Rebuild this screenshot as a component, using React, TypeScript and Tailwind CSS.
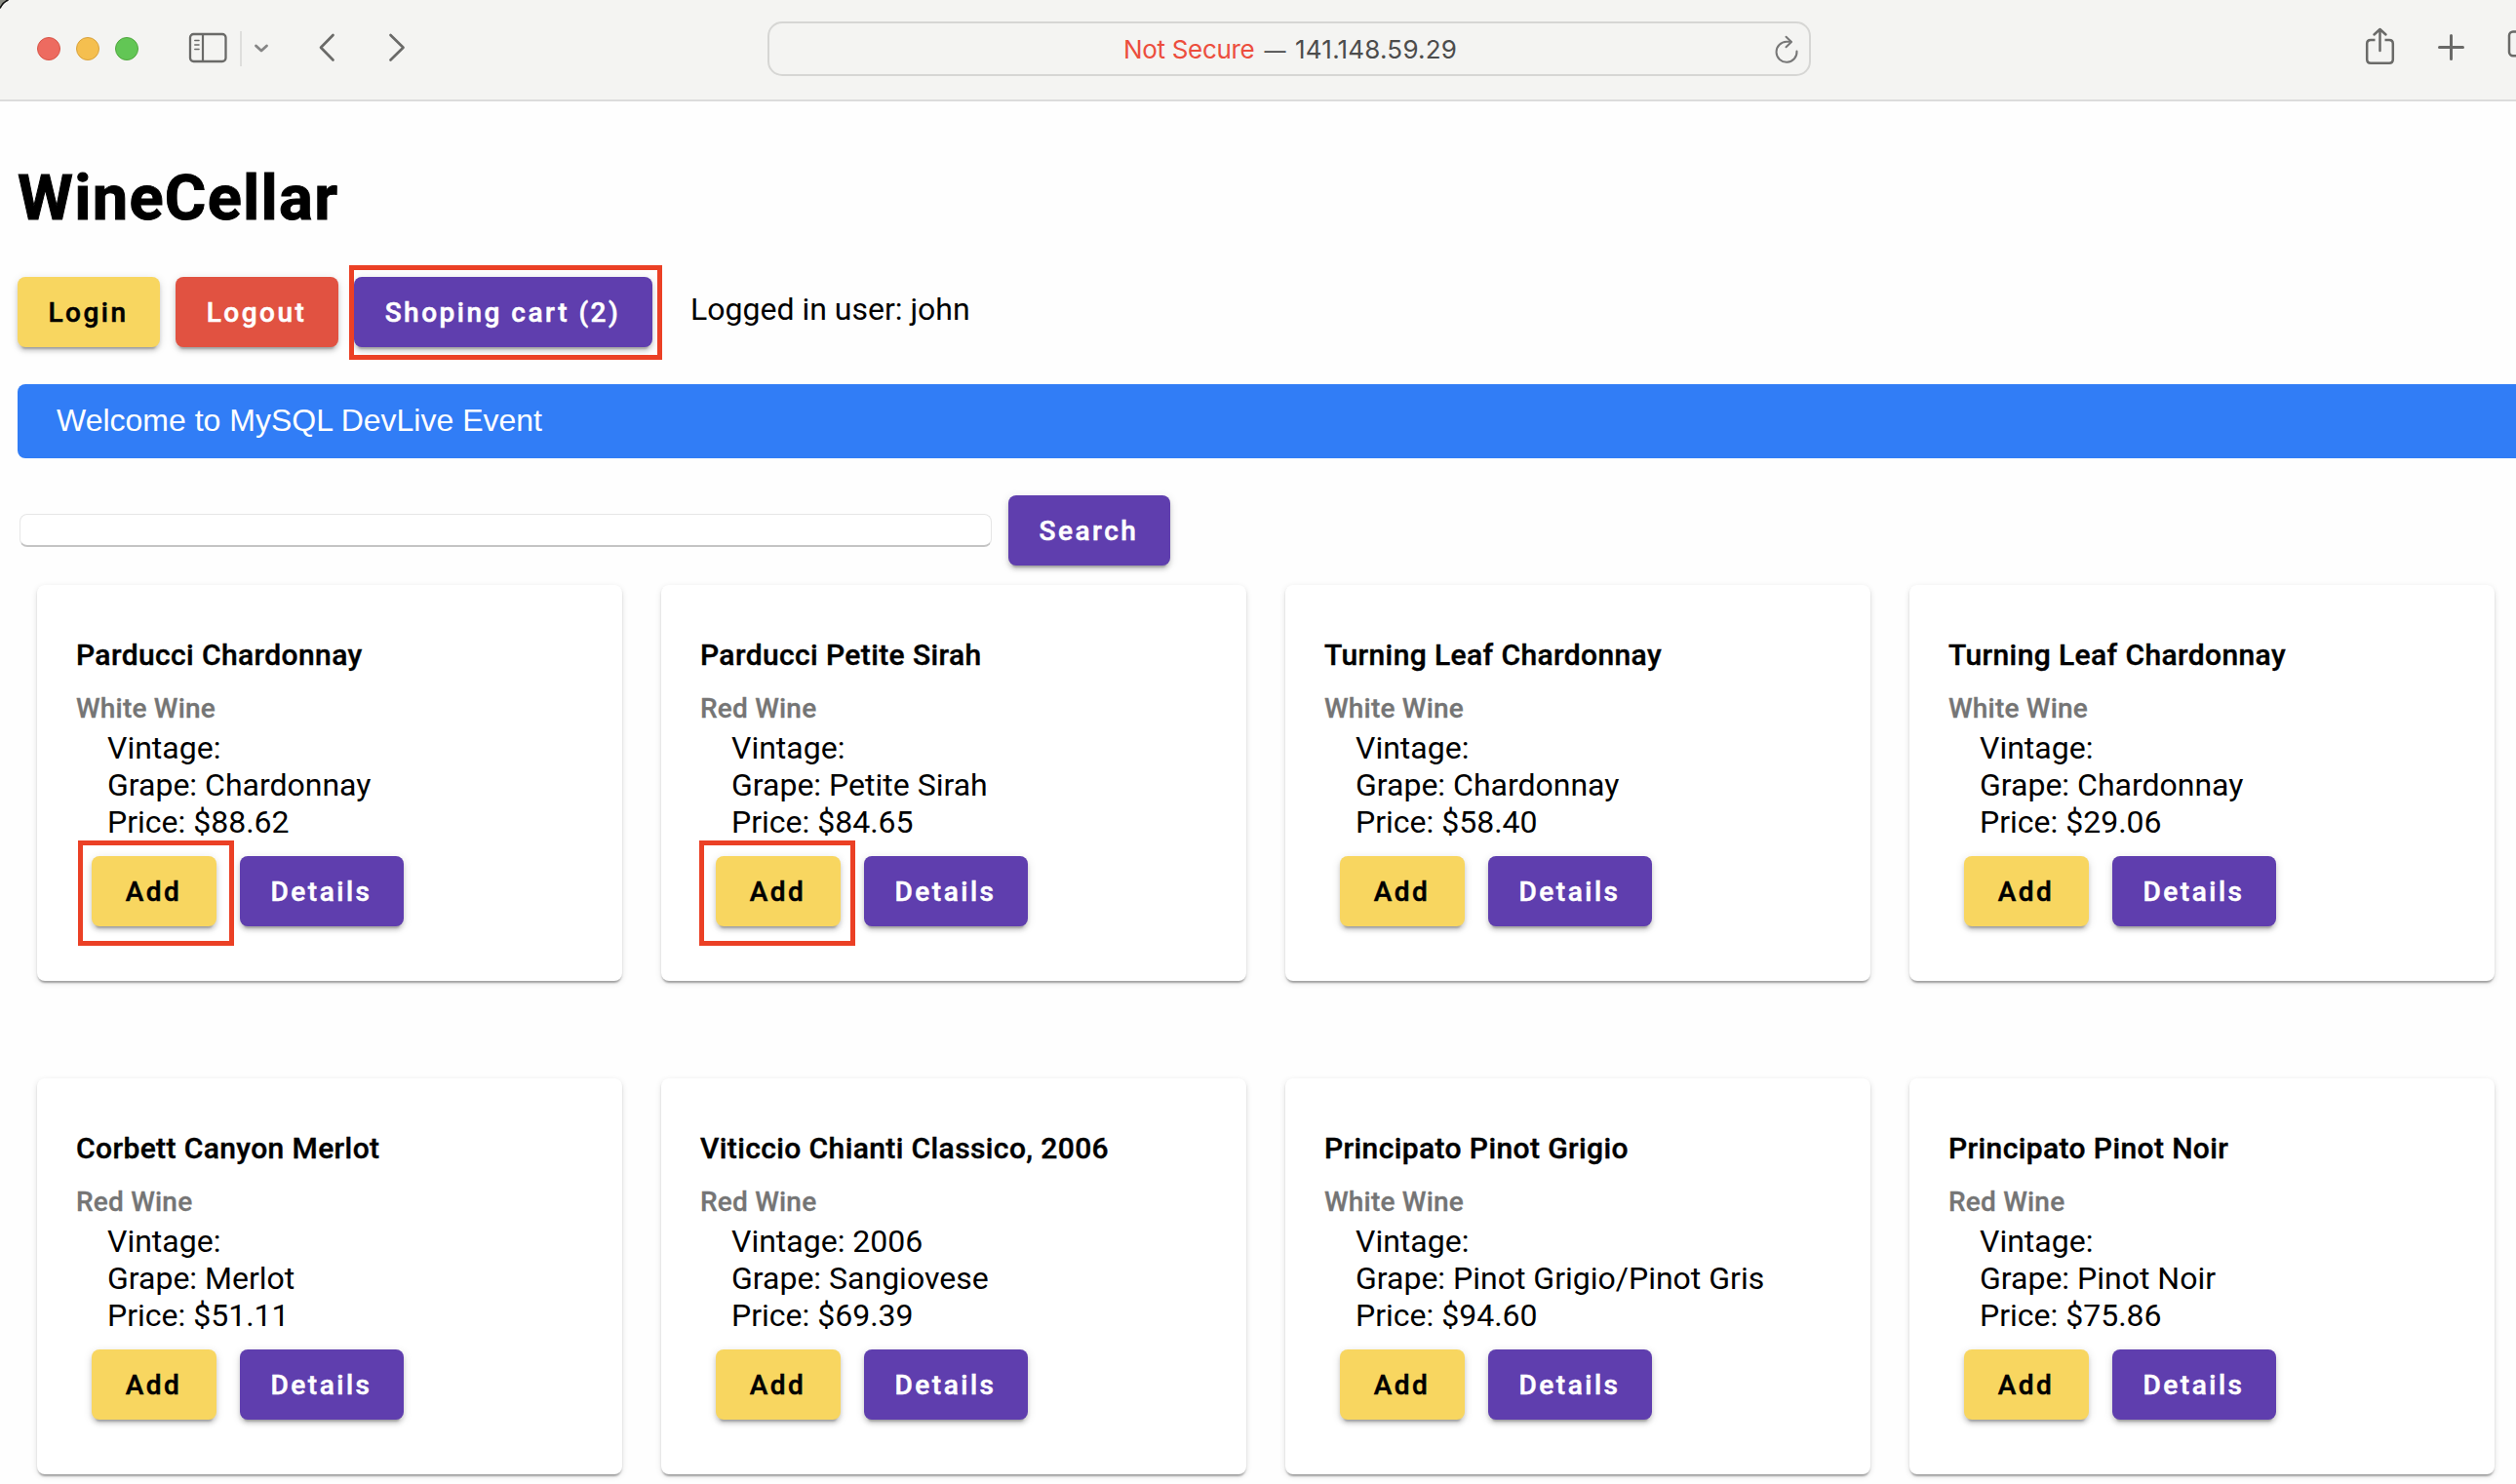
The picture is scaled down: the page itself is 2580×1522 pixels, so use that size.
import type { ReactNode } from "react";

type Wine = { name: string; kind: string; vintage: string; grape: string; price: string; marked?: string };

const wines: Wine[] = [
  { name: "Parducci Chardonnay", kind: "White Wine", vintage: "", grape: "Chardonnay", price: "$88.62", marked: "-left-[14px]" },
  { name: "Parducci Petite Sirah", kind: "Red Wine", vintage: "", grape: "Petite Sirah", price: "$84.65", marked: "-left-[17px]" },
  { name: "Turning Leaf Chardonnay", kind: "White Wine", vintage: "", grape: "Chardonnay", price: "$58.40" },
  { name: "Turning Leaf Chardonnay", kind: "White Wine", vintage: "", grape: "Chardonnay", price: "$29.06" },
  { name: "Corbett Canyon Merlot", kind: "Red Wine", vintage: "", grape: "Merlot", price: "$51.11" },
  { name: "Viticcio Chianti Classico, 2006", kind: "Red Wine", vintage: "2006", grape: "Sangiovese", price: "$69.39" },
  { name: "Principato Pinot Grigio", kind: "White Wine", vintage: "", grape: "Pinot Grigio/Pinot Gris", price: "$94.60" },
  { name: "Principato Pinot Noir", kind: "Red Wine", vintage: "", grape: "Pinot Noir", price: "$75.86" },
];

const tones = {
  yellow: "bg-[#f8d660] text-black",
  red: "bg-[#e15241] text-white",
  purple: "bg-[#5f3eae] text-white",
};

function Button({ tone, width, children }: { tone: keyof typeof tones; width: string; children: ReactNode }) {
  return (
    <button
      className={`flex h-[72px] shrink-0 items-center justify-center whitespace-nowrap rounded-[8px] pr-px pt-[2px] text-[28px] font-medium tracking-[2.5px] [-webkit-text-stroke:0.5px] shadow-[0_6px_2px_-4px_rgba(0,0,0,0.2),0_4px_4px_0_rgba(0,0,0,0.14),0_2px_10px_0_rgba(0,0,0,0.12)] ${tones[tone]} ${width}`}
    >
      {children}
    </button>
  );
}

function Card({ wine }: { wine: Wine }) {
  return (
    <article className="h-[406px] w-[600px] rounded-[8px] bg-white px-[40px] pt-[54px] shadow-[0_4px_2px_-2px_rgba(0,0,0,0.2),0_2px_2px_0_rgba(0,0,0,0.14),0_2px_6px_0_rgba(0,0,0,0.12)]">
      <h2 className="whitespace-nowrap text-[30px] font-medium leading-[36px] tracking-[0.39px] [-webkit-text-stroke:0.4px]">{wine.name}</h2>
      <p className="mt-[19px] text-[28px] font-medium leading-[36px] tracking-[0.2px] text-[#757575] [-webkit-text-stroke:0.3px]">{wine.kind}</p>
      <div className="pl-[32px] pt-[3px] text-[32px] leading-[38px]">
        <p>Vintage: {wine.vintage}</p>
        <p className="whitespace-nowrap">Grape: {wine.grape}</p>
        <p>Price: {wine.price}</p>
      </div>
      <div className="mt-[16px] flex gap-[24px] pl-[16px]">
        <div className="relative">
          <Button tone="yellow" width="w-[128px]">Add</Button>
          {wine.marked && (
            <span className={`absolute -top-[16px] h-[108px] w-[160px] border-[5px] border-[#eb4025] ${wine.marked}`} />
          )}
        </div>
        <Button tone="purple" width="w-[168px]">Details</Button>
      </div>
    </article>
  );
}

function Toolbar() {
  return (
    <header className="relative flex h-[104px] items-start overflow-hidden border-b-2 border-[#dcdcdc] bg-[#f4f4f2]">
      <svg className="absolute left-0 top-0" width="10" height="10" viewBox="0 0 10 10">
        <path d="M0 0H9Q3 2 0 9Z" fill="#8a8c84" />
        <path d="M0 8.500Q3 2 8.500 0" fill="none" stroke="#111" strokeWidth="1.600" />
      </svg>
      <div className="flex gap-4 pl-[38px] pt-[38px]">
        <span className="h-6 w-6 rounded-full border border-[#d85548] bg-[#ed6b60]" />
        <span className="h-6 w-6 rounded-full border border-[#d9a23c] bg-[#f5bf4f]" />
        <span className="h-6 w-6 rounded-full border border-[#51a73f] bg-[#62c655]" />
      </div>
      <svg className="ml-[48px] mt-[28px] shrink-0" width="240" height="44" viewBox="190 28 240 44" fill="none" stroke="#6a6a68" strokeLinecap="round" strokeLinejoin="round">
        <rect x="195" y="35" width="36.500" height="28" rx="3.500" strokeWidth="2.300" />
        <path d="M208 35V63" strokeWidth="2.200" strokeLinecap="butt" />
        <path d="M199.800 41.500H204M199.800 46H204M199.800 50.500H204" strokeWidth="1.500" />
        <path d="M247 32V68" stroke="#dededc" strokeWidth="2" strokeLinecap="butt" />
        <path d="M262.500 47L268 52L273.500 47" stroke="#858585" strokeWidth="2.800" />
        <path d="M341.500 36L329 48.800L341.500 61.500" strokeWidth="2.700" />
        <path d="M400.500 36L413.500 48.800L400.500 61.500" strokeWidth="2.700" />
      </svg>
      <div className="relative ml-[357px] mt-[22px] flex h-[56px] w-[1070px] shrink-0 items-center justify-center rounded-[15px] border-2 border-[#d6d6d4] font-['Inter',sans-serif] text-[26px] tracking-[-0.300px] text-[#4c4c4c]">
        <span className="whitespace-pre pl-[2px]">
          <span className="text-[#ec4e3d]">Not Secure</span>
          <span className="tracking-[0.5px]"> </span>
          <span className="inline-block w-[26px] text-center text-[22px]">—</span>
          <span className="tracking-[0.5px]"> </span>
          <span className="tracking-[0.200px]">141.148.59.29</span>
        </span>
        <svg className="absolute right-[10px] top-[12px]" width="26" height="32" viewBox="0 0 26 32" fill="none" stroke="#777" strokeWidth="2" strokeLinecap="round" strokeLinejoin="round">
          <path d="M23.500 16.500A10.500 10.500 0 1 1 13 6.800H17.500" />
          <path d="M12.500 1.800L18 7L12.500 12.200" />
        </svg>
      </div>
      <svg className="ml-auto mt-[24px] shrink-0" width="160" height="48" viewBox="2420 24 160 48" fill="none" stroke="#6a6a68" strokeWidth="2.500" strokeLinecap="round" strokeLinejoin="round">
        <path d="M2435.500 41H2431Q2427.200 41 2427.200 44.800V61Q2427.200 64.700 2431 64.700H2450Q2453.800 64.700 2453.800 61V44.800Q2453.800 41 2450 41H2445.500" strokeLinecap="butt" />
        <path d="M2440.500 52V30M2434.500 35.500L2440.500 30L2446.500 35.500" />
        <path d="M2501.500 48.500H2525.500M2513.500 36.500V60.500" strokeWidth="3" />
        <rect x="2573" y="32.500" width="26" height="24.700" rx="4" />
      </svg>
    </header>
  );
}

export default function App() {
  return (
    <div className="h-[1522px] w-[2580px] overflow-hidden bg-[#fefefe] font-['Roboto',sans-serif] text-black">
      <Toolbar />
      <main className="pl-[18px]">
        <h1 className="pt-[59px] text-[65px] font-bold leading-[80px] tracking-[1.3px] [-webkit-text-stroke:1px]">WineCellar</h1>
        <div className="mt-[41px] flex gap-4">
          <Button tone="yellow" width="w-[146px]">Login</Button>
          <Button tone="red" width="w-[167px]">Logout</Button>
          <div className="relative">
            <Button tone="purple" width="w-[306px]">Shoping cart (2)</Button>
            <span className="absolute -left-[5px] -top-[12px] h-[97px] w-[321px] border-[5px] border-[#eb4025]" />
          </div>
          <p className="ml-[23px] mt-[14px] text-[32px] leading-[38px]">Logged in user: john</p>
        </div>
        <div className="mt-[38px] h-[76px] rounded-l-[8px] bg-[#317df6] pl-[40px] font-['Liberation_Sans',sans-serif] text-[32px] leading-[74px] text-white">
          Welcome to MySQL DevLive Event
        </div>
        <div className="mt-[38px] flex items-center">
          <input className="ml-[2px] h-[34px] w-[997px] rounded-[8px] border border-b-2 border-[#e6e6e6] border-b-[#c4c4c4] bg-white" />
          <div className="ml-[17px]">
            <Button tone="purple" width="w-[166px]">Search</Button>
          </div>
        </div>
        <section className="grid grid-cols-[repeat(4,600px)] gap-x-[40px] gap-y-[100px] pl-[20px] pt-[20px]">
          {wines.map((wine, i) => (
            <Card key={i} wine={wine} />
          ))}
        </section>
      </main>
    </div>
  );
}
